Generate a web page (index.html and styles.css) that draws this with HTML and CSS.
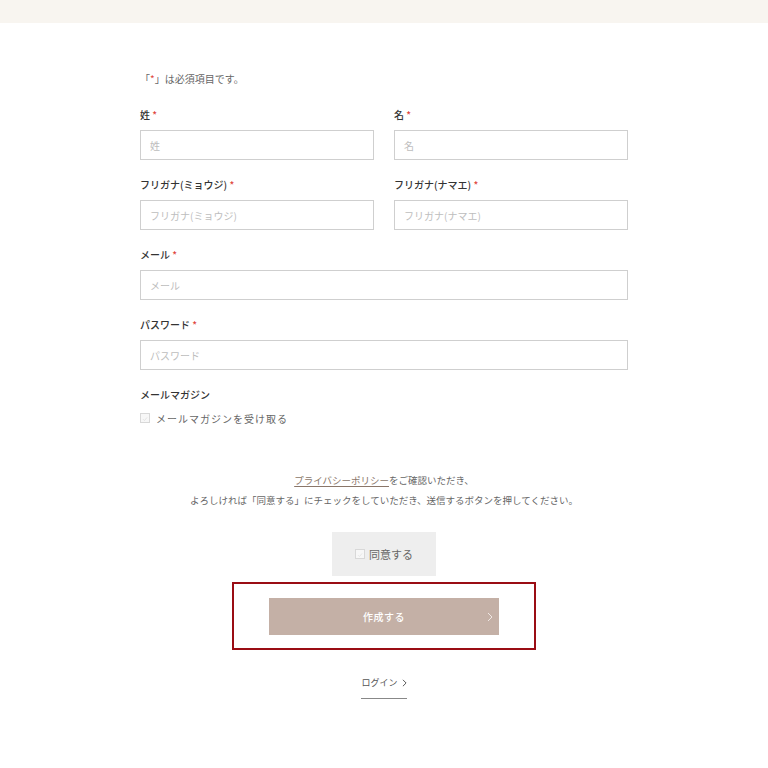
FILE: index.html
```html
<!DOCTYPE html>
<html lang="ja">
<head>
<meta charset="utf-8">
<title>会員登録</title>
<link rel="stylesheet" href="styles.css">
</head>
<body>
<div class="topbar"></div>
<main class="form">
  <p class="note">「<span class="req">*</span>」は必須項目です。</p>

  <div class="row two">
    <div class="field">
      <div class="label">姓 <span class="req">*</span></div>
      <div class="input">姓</div>
    </div>
    <div class="field">
      <div class="label">名 <span class="req">*</span></div>
      <div class="input">名</div>
    </div>
  </div>

  <div class="row two">
    <div class="field">
      <div class="label">フリガナ(ミョウジ) <span class="req">*</span></div>
      <div class="input">フリガナ(ミョウジ)</div>
    </div>
    <div class="field">
      <div class="label">フリガナ(ナマエ) <span class="req">*</span></div>
      <div class="input">フリガナ(ナマエ)</div>
    </div>
  </div>

  <div class="row">
    <div class="field">
      <div class="label">メール <span class="req">*</span></div>
      <div class="input">メール</div>
    </div>
  </div>

  <div class="row">
    <div class="field">
      <div class="label">パスワード <span class="req">*</span></div>
      <div class="input">パスワード</div>
    </div>
  </div>

  <div class="row">
    <div class="label">メールマガジン</div>
    <div class="check-row">
      <span class="box"><svg viewBox="0 0 10 10" width="10" height="10"><path d="M2.5 5.2 L4.3 7 L7.6 3" fill="none" stroke="#e2e2e2" stroke-width="1.2"/></svg></span>
      <span class="check-text">メールマガジンを受け取る</span>
    </div>
  </div>

  <div class="privacy">
    <p><a class="plink">プライバシーポリシー</a>をご確認いただき、</p>
    <p>よろしければ「同意する」にチェックをしていただき、送信するボタンを押してください。</p>
  </div>

  <div class="agree">
    <span class="box"><svg viewBox="0 0 10 10" width="10" height="10"><path d="M2.5 5.2 L4.3 7 L7.6 3" fill="none" stroke="#e6e6e6" stroke-width="1.2"/></svg></span>
    <span class="agree-text">同意する</span>
  </div>

  <div class="highlight">
    <div class="submit">
      <span>作成する</span>
      <svg class="chev" viewBox="0 0 6 10" width="6" height="10"><path d="M1 1 L5 5 L1 9" fill="none" stroke="#efe7e3" stroke-width="1"/></svg>
    </div>
  </div>

  <div class="login-wrap">
    <a class="login">ログイン <svg viewBox="0 0 6 10" width="5" height="8"><path d="M1 1 L5 5 L1 9" fill="none" stroke="#555" stroke-width="1.2"/></svg></a>
  </div>
</main>
</body>
</html>
```
FILE: styles.css
```css
html, body {
  margin: 0;
  padding: 0;
  background: #ffffff;
}
body {
  font-family: "Noto Sans CJK JP", "Noto Sans", sans-serif;
  color: #444;
  font-size: 11px;
}
p { margin: 0; }

.topbar {
  height: 23px;
  background: #f8f5f0;
}

.form {
  width: 488px;
  margin: 0 auto;
  padding-top: 48px;
  display: flex;
  flex-direction: column;
}

.note {
  font-size: 10px;
  line-height: 16px;
  color: #666;
  margin-bottom: 20px;
}

.req { color: #e0483e; }

.row { margin-bottom: 17px; }
.row.two {
  display: grid;
  grid-template-columns: 1fr 1fr;
  column-gap: 20px;
}

.label {
  font-size: 10px;
  line-height: 16px;
  color: #333;
  font-weight: 500;
  margin-bottom: 7px;
}

.input {
  height: 30px;
  box-sizing: border-box;
  border: 1px solid #cfcfcf;
  padding: 0 9px;
  display: flex;
  align-items: center;
  font-size: 10px;
  color: #bdbdbd;
}

.check-row {
  display: flex;
  align-items: center;
  gap: 6px;
  margin-top: 2px;
  height: 16px;
}
.box {
  width: 10px;
  height: 10px;
  box-sizing: border-box;
  border: 1px solid #d8d8d8;
  background: #f7f7f7;
  display: inline-flex;
}
.box svg { display: block; }
.check-text {
  font-size: 10px;
  color: #666;
  letter-spacing: 1px;
}

.privacy {
  margin-top: 27px;
  text-align: center;
  font-size: 9.5px;
  line-height: 20px;
  color: #666;
}
.plink {
  color: #8a7669;
  text-decoration: underline;
  text-underline-offset: 2px;
}

.agree {
  align-self: center;
  width: 104px;
  height: 44px;
  margin-top: 22px;
  background: #eeeeee;
  display: flex;
  align-items: center;
  justify-content: center;
  gap: 4px;
}
.agree-text {
  font-size: 11px;
  color: #666;
}

.highlight {
  align-self: center;
  width: 304px;
  height: 68px;
  box-sizing: border-box;
  margin-top: 6px;
  border: 2px solid #9a0d14;
  display: flex;
  align-items: center;
  justify-content: center;
}
.submit {
  width: 230px;
  height: 37px;
  background: #c4b0a6;
  color: #ffffff;
  font-size: 10px;
  font-weight: 500;
  display: flex;
  align-items: center;
  justify-content: center;
  position: relative;
  letter-spacing: 0.5px;
}
.chev {
  position: absolute;
  right: 6px;
  top: 14px;
}

.login-wrap {
  display: flex;
  justify-content: center;
  margin-top: 25px;
}
.login {
  font-size: 9px;
  line-height: 16px;
  color: #555;
  padding: 0 0 7px;
  border-bottom: 1px solid #888;
  display: flex;
  align-items: center;
  gap: 4px;
}
```
